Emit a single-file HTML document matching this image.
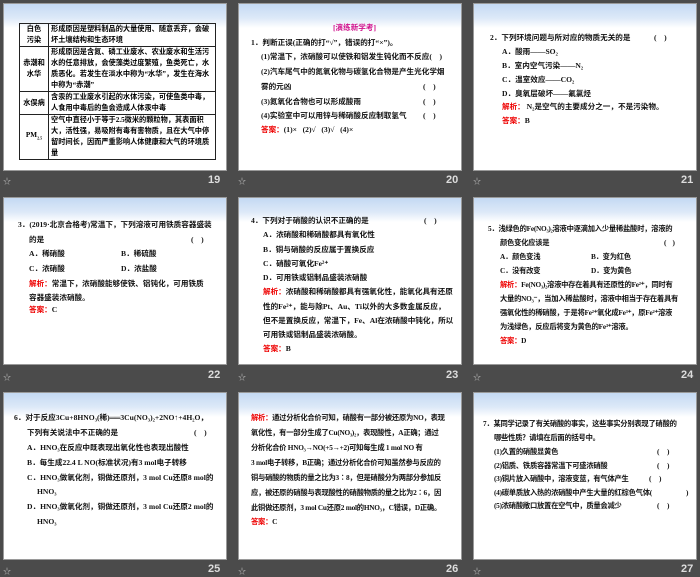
<!DOCTYPE html>
<html><head><meta charset="utf-8"><style>
*{margin:0;padding:0;box-sizing:border-box}
body{width:700px;height:577px;background:#4b4b4b;position:relative;overflow:hidden;font-family:"Liberation Serif","Noto Sans CJK SC",sans-serif;}
.s{position:absolute;width:224px;height:168px;background:linear-gradient(#c4d9f3 0px,#dde9f8 14px,#fff 24px,#fff 100%);border:1px solid #9a9a9a;overflow:hidden}
.t{position:absolute;font-size:7.6px;font-weight:bold;color:#111;white-space:nowrap;line-height:9px}
.n .t{letter-spacing:-0.25px;font-size:7.3px}
.r{color:#e00}
.m{color:#d0108c}
.f{position:absolute;color:#ddd;font-family:"Liberation Sans",sans-serif;font-size:11px;font-weight:bold}
.st{position:absolute;color:#bbb;font-size:8px}
table{position:absolute;left:15px;top:19px;width:197px;border-collapse:collapse;font-size:7.2px;font-weight:bold;line-height:11px}
td{border:1px solid #222;padding:0 2px;vertical-align:middle}
td.a{width:29px;text-align:center;padding:0}
</style></head><body>

<div class="s" style="left:3px;top:3px">
<table>
<tr><td class="a">白色<br>污染</td><td>形成原因是塑料制品的大量使用、随意丢弃，会破坏土壤结构和生态环境</td></tr>
<tr><td class="a">赤潮和<br>水华</td><td>形成原因是含氮、磷工业废水、农业废水和生活污水的任意排放，会使藻类过度繁殖，鱼类死亡，水质恶化。若发生在淡水中称为“水华”，发生在海水中称为“赤潮”</td></tr>
<tr><td class="a">水俣病</td><td>含汞的工业废水引起的水体污染，可使鱼类中毒，人食用中毒后的鱼会造成人体汞中毒</td></tr>
<tr><td class="a">PM<sub style="font-size:4px">2.5</sub></td><td>空气中直径小于等于2.5微米的颗粒物，其表面积大，活性强，易吸附有毒有害物质，且在大气中停留时间长，因而严重影响人体健康和大气的环境质量</td></tr>
</table>
</div>
<span class="st" style="left:3px;top:176px">☆</span><span class="f" style="left:208px;top:174px">19</span>

<div class="s" style="left:238px;top:3px">
<div class="t m" style="left:94px;top:19px">[演练新学考]</div>
<div class="t" style="left:12px;top:34px">1．判断正误(正确的打“√”，错误的打“×”)。</div>
<div class="t" style="left:22px;top:48px">(1)常温下，浓硝酸可以使铁和铝发生钝化而不反应(&nbsp;&nbsp;&nbsp;&nbsp;)</div>
<div class="t" style="left:22px;top:63px">(2)汽车尾气中的氮氧化物与碳氢化合物是产生光化学烟</div>
<div class="t" style="left:22px;top:78px">雾的元凶</div><div class="t" style="left:184px;top:78px">(&nbsp;&nbsp;&nbsp;&nbsp;)</div>
<div class="t" style="left:22px;top:93px">(3)氮氧化合物也可以形成酸雨</div><div class="t" style="left:184px;top:93px">(&nbsp;&nbsp;&nbsp;&nbsp;)</div>
<div class="t" style="left:22px;top:107px">(4)实验室中可以用锌与稀硝酸反应制取氢气</div><div class="t" style="left:184px;top:107px">(&nbsp;&nbsp;&nbsp;&nbsp;)</div>
<div class="t" style="left:22px;top:121px"><span class="r">答案：</span>(1)×&nbsp;&nbsp;&nbsp;(2)√&nbsp;&nbsp;&nbsp;(3)√&nbsp;&nbsp;&nbsp;(4)×</div>
</div>
<span class="st" style="left:238px;top:176px">☆</span><span class="f" style="left:446px;top:174px">20</span>

<div class="s" style="left:473px;top:3px">
<div class="t" style="left:16px;top:29px">2．下列环境问题与所对应的物质无关的是</div><div class="t" style="left:180px;top:29px">(&nbsp;&nbsp;&nbsp;&nbsp;)</div>
<div class="t" style="left:28px;top:43px">A．酸雨——SO₂</div>
<div class="t" style="left:28px;top:57px">B．室内空气污染——N₂</div>
<div class="t" style="left:28px;top:71px">C．温室效应——CO₂</div>
<div class="t" style="left:28px;top:85px">D．臭氧层破坏——氟氯烃</div>
<div class="t" style="left:28px;top:98px"><span class="r">解析：</span>&nbsp;N₂是空气的主要成分之一，不是污染物。</div>
<div class="t" style="left:28px;top:112px"><span class="r">答案：</span>B</div>
</div>
<span class="st" style="left:473px;top:176px">☆</span><span class="f" style="left:681px;top:174px">21</span>

<div class="s" style="left:3px;top:197px">
<div class="t" style="left:14px;top:22px">3．(2019·北京合格考)常温下，下列溶液可用铁质容器盛装</div>
<div class="t" style="left:25px;top:37px">的是</div><div class="t" style="left:187px;top:37px">(&nbsp;&nbsp;&nbsp;&nbsp;)</div>
<div class="t" style="left:25px;top:51px">A．稀硝酸</div><div class="t" style="left:117px;top:51px">B．稀硫酸</div>
<div class="t" style="left:25px;top:66px">C．浓硝酸</div><div class="t" style="left:117px;top:66px">D．浓盐酸</div>
<div class="t" style="left:25px;top:81px"><span class="r">解析：</span>常温下，浓硝酸能够使铁、铝钝化，可用铁质</div>
<div class="t" style="left:25px;top:95px">容器盛装浓硝酸。</div>
<div class="t" style="left:25px;top:107px"><span class="r">答案：</span>C</div>
</div>
<span class="st" style="left:3px;top:372px">☆</span><span class="f" style="left:208px;top:369px">22</span>

<div class="s" style="left:238px;top:197px">
<div class="t" style="left:12px;top:18px">4．下列对于硝酸的认识不正确的是</div><div class="t" style="left:185px;top:18px">(&nbsp;&nbsp;&nbsp;&nbsp;)</div>
<div class="t" style="left:24px;top:32px">A．浓硝酸和稀硝酸都具有氧化性</div>
<div class="t" style="left:24px;top:47px">B．铜与硝酸的反应属于置换反应</div>
<div class="t" style="left:24px;top:61px">C．硝酸可氧化Fe²⁺</div>
<div class="t" style="left:24px;top:75px">D．可用铁或铝制品盛装浓硝酸</div>
<div class="t" style="left:24px;top:89px"><span class="r">解析：</span>浓硝酸和稀硝酸都具有强氧化性，能氧化具有还原</div>
<div class="t" style="left:24px;top:104px">性的Fe²⁺，能与除Pt、Au、Ti以外的大多数金属反应，</div>
<div class="t" style="left:24px;top:118px">但不是置换反应，常温下，Fe、Al在浓硝酸中钝化，所以</div>
<div class="t" style="left:24px;top:132px">可用铁或铝制品盛装浓硝酸。</div>
<div class="t" style="left:24px;top:146px"><span class="r">答案：</span>B</div>
</div>
<span class="st" style="left:238px;top:372px">☆</span><span class="f" style="left:446px;top:369px">23</span>

<div class="s n" style="left:473px;top:197px">
<div class="t" style="left:14px;top:26px">5．浅绿色的Fe(NO₃)₂溶液中逐滴加入少量稀盐酸时，溶液的</div>
<div class="t" style="left:26px;top:40px">颜色变化应该是</div><div class="t" style="left:190px;top:40px">(&nbsp;&nbsp;&nbsp;&nbsp;)</div>
<div class="t" style="left:26px;top:54px">A．颜色变浅</div><div class="t" style="left:117px;top:54px">B．变为红色</div>
<div class="t" style="left:26px;top:68px">C．没有改变</div><div class="t" style="left:117px;top:68px">D．变为黄色</div>
<div class="t" style="left:26px;top:82px"><span class="r">解析：</span>Fe(NO₃)₂溶液中存在着具有还原性的Fe²⁺，同时有</div>
<div class="t" style="left:26px;top:96px">大量的NO₃⁻，当加入稀盐酸时，溶液中相当于存在着具有</div>
<div class="t" style="left:26px;top:110px">强氧化性的稀硝酸，于是将Fe²⁺氧化成Fe³⁺，原Fe²⁺溶液</div>
<div class="t" style="left:26px;top:124px">为浅绿色，反应后将变为黄色的Fe³⁺溶液。</div>
<div class="t" style="left:26px;top:138px"><span class="r">答案：</span>D</div>
</div>
<span class="st" style="left:473px;top:372px">☆</span><span class="f" style="left:681px;top:369px">24</span>

<div class="s" style="left:3px;top:392px">
<div class="t" style="left:10px;top:20px">6．对于反应3Cu+8HNO₃(稀)══3Cu(NO₃)₂+2NO↑+4H₂O，</div>
<div class="t" style="left:23px;top:35px">下列有关说法中不正确的是</div><div class="t" style="left:190px;top:35px">(&nbsp;&nbsp;&nbsp;&nbsp;)</div>
<div class="t" style="left:23px;top:50px">A．HNO₃在反应中既表现出氧化性也表现出酸性</div>
<div class="t" style="left:23px;top:65px">B．每生成22.4 L NO(标准状况)有3 mol电子转移</div>
<div class="t" style="left:23px;top:80px">C．HNO₃做氧化剂，铜做还原剂，3 mol Cu还原8 mol的</div>
<div class="t" style="left:33px;top:94px">HNO₃</div>
<div class="t" style="left:23px;top:109px">D．HNO₃做氧化剂，铜做还原剂，3 mol Cu还原2 mol的</div>
<div class="t" style="left:33px;top:124px">HNO₃</div>
</div>
<span class="st" style="left:3px;top:566px">☆</span><span class="f" style="left:208px;top:563px">25</span>

<div class="s n" style="left:238px;top:392px">
<div class="t" style="left:12px;top:20px"><span class="r">解析：</span>通过分析化合价可知，硝酸有一部分被还原为NO，表现</div>
<div class="t" style="left:12px;top:35px">氧化性，有一部分生成了Cu(NO₃)₂，表现酸性，A正确；通过</div>
<div class="t" style="left:12px;top:50px">分析化合价 HNO₃→NO(+5→+2)可知每生成 1 mol NO 有</div>
<div class="t" style="left:12px;top:65px">3 mol电子转移，B正确；通过分析化合价可知虽然参与反应的</div>
<div class="t" style="left:12px;top:80px">铜与硝酸的物质的量之比为3∶8，但是硝酸分为两部分参加反</div>
<div class="t" style="left:12px;top:95px">应，被还原的硝酸与表现酸性的硝酸物质的量之比为2∶6，因</div>
<div class="t" style="left:12px;top:110px">此铜做还原剂，3 mol Cu还原2 mol的HNO₃，C错误，D正确。</div>
<div class="t" style="left:12px;top:124px"><span class="r">答案：</span>C</div>
</div>
<span class="st" style="left:238px;top:566px">☆</span><span class="f" style="left:446px;top:563px">26</span>

<div class="s n" style="left:473px;top:392px">
<div class="t" style="left:9px;top:26px">7．某同学记录了有关硝酸的事实，这些事实分别表现了硝酸的</div>
<div class="t" style="left:20px;top:40px">哪些性质？请填在后面的括号中。</div>
<div class="t" style="left:20px;top:54px">(1)久置的硝酸显黄色</div><div class="t" style="left:183px;top:54px">(&nbsp;&nbsp;&nbsp;&nbsp;&nbsp;)</div>
<div class="t" style="left:20px;top:68px">(2)铝质、铁质容器常温下可盛浓硝酸</div><div class="t" style="left:183px;top:68px">(&nbsp;&nbsp;&nbsp;&nbsp;&nbsp;)</div>
<div class="t" style="left:20px;top:81px">(3)铜片放入硝酸中，溶液变蓝，有气体产生</div><div class="t" style="left:175px;top:81px">(&nbsp;&nbsp;&nbsp;&nbsp;&nbsp;)</div>
<div class="t" style="left:20px;top:95px">(4)碳单质放入热的浓硝酸中产生大量的红棕色气体(</div><div class="t" style="left:212px;top:95px">)</div>
<div class="t" style="left:20px;top:108px">(5)浓硝酸敞口放置在空气中，质量会减少</div><div class="t" style="left:183px;top:108px">(&nbsp;&nbsp;&nbsp;&nbsp;&nbsp;)</div>
</div>
<span class="st" style="left:473px;top:566px">☆</span><span class="f" style="left:681px;top:563px">27</span>

</body></html>
